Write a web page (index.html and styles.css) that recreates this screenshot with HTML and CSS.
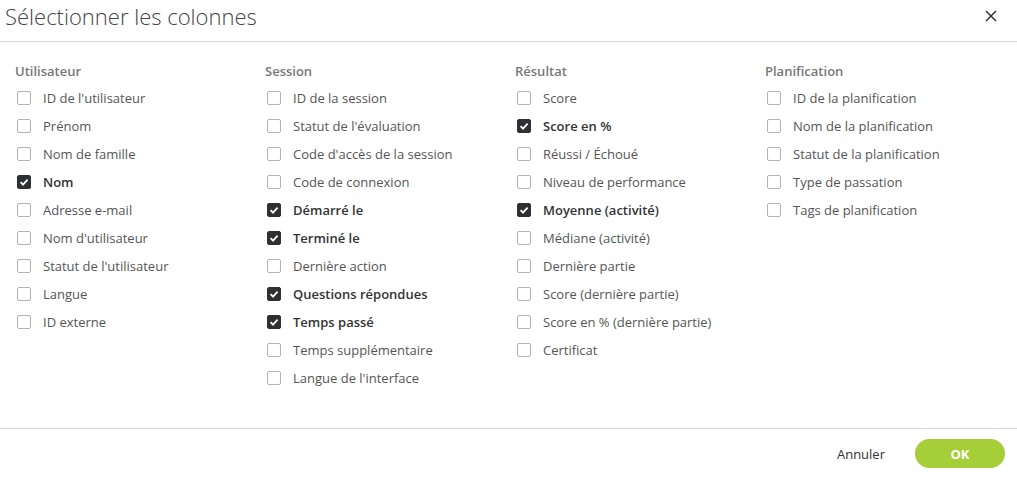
FILE: index.html
```html
<!DOCTYPE html>
<html lang="fr">
<head>
<meta charset="utf-8">
<link rel="stylesheet" href="styles.css">
</head>
<body>
<div class="dialog">
  <header class="head">
    <h1 class="title">Sélectionner les colonnes</h1>
    <button class="close" aria-label="Fermer">
      <svg width="12" height="12" viewBox="0 0 12 12"><path d="M1 1L11 11M11 1L1 11" stroke="#333" stroke-width="1.5" fill="none"/></svg>
    </button>
  </header>
  <main class="content">
    <section class="col">
      <h2 class="col-title">Utilisateur</h2>
      <label class="opt"><span class="box"></span>ID de l'utilisateur</label>
      <label class="opt"><span class="box"></span>Prénom</label>
      <label class="opt"><span class="box"></span>Nom de famille</label>
      <label class="opt on"><span class="box"><svg viewBox="0 0 12 12"><path d="M2.6 6.2L5 8.6L9.6 3.6" stroke="#fff" stroke-width="1.8" fill="none"/></svg></span>Nom</label>
      <label class="opt"><span class="box"></span>Adresse e-mail</label>
      <label class="opt"><span class="box"></span>Nom d'utilisateur</label>
      <label class="opt"><span class="box"></span>Statut de l'utilisateur</label>
      <label class="opt"><span class="box"></span>Langue</label>
      <label class="opt"><span class="box"></span>ID externe</label>
    </section>
    <section class="col">
      <h2 class="col-title">Session</h2>
      <label class="opt"><span class="box"></span>ID de la session</label>
      <label class="opt"><span class="box"></span>Statut de l'évaluation</label>
      <label class="opt"><span class="box"></span>Code d'accès de la session</label>
      <label class="opt"><span class="box"></span>Code de connexion</label>
      <label class="opt on"><span class="box"><svg viewBox="0 0 12 12"><path d="M2.6 6.2L5 8.6L9.6 3.6" stroke="#fff" stroke-width="1.8" fill="none"/></svg></span>Démarré le</label>
      <label class="opt on"><span class="box"><svg viewBox="0 0 12 12"><path d="M2.6 6.2L5 8.6L9.6 3.6" stroke="#fff" stroke-width="1.8" fill="none"/></svg></span>Terminé le</label>
      <label class="opt"><span class="box"></span>Dernière action</label>
      <label class="opt on"><span class="box"><svg viewBox="0 0 12 12"><path d="M2.6 6.2L5 8.6L9.6 3.6" stroke="#fff" stroke-width="1.8" fill="none"/></svg></span>Questions répondues</label>
      <label class="opt on"><span class="box"><svg viewBox="0 0 12 12"><path d="M2.6 6.2L5 8.6L9.6 3.6" stroke="#fff" stroke-width="1.8" fill="none"/></svg></span>Temps passé</label>
      <label class="opt"><span class="box"></span>Temps supplémentaire</label>
      <label class="opt"><span class="box"></span>Langue de l'interface</label>
    </section>
    <section class="col">
      <h2 class="col-title">Résultat</h2>
      <label class="opt"><span class="box"></span>Score</label>
      <label class="opt on"><span class="box"><svg viewBox="0 0 12 12"><path d="M2.6 6.2L5 8.6L9.6 3.6" stroke="#fff" stroke-width="1.8" fill="none"/></svg></span>Score en %</label>
      <label class="opt"><span class="box"></span>Réussi / Échoué</label>
      <label class="opt"><span class="box"></span>Niveau de performance</label>
      <label class="opt on"><span class="box"><svg viewBox="0 0 12 12"><path d="M2.6 6.2L5 8.6L9.6 3.6" stroke="#fff" stroke-width="1.8" fill="none"/></svg></span>Moyenne (activité)</label>
      <label class="opt"><span class="box"></span>Médiane (activité)</label>
      <label class="opt"><span class="box"></span>Dernière partie</label>
      <label class="opt"><span class="box"></span>Score (dernière partie)</label>
      <label class="opt"><span class="box"></span>Score en % (dernière partie)</label>
      <label class="opt"><span class="box"></span>Certificat</label>
    </section>
    <section class="col">
      <h2 class="col-title">Planification</h2>
      <label class="opt"><span class="box"></span>ID de la planification</label>
      <label class="opt"><span class="box"></span>Nom de la planification</label>
      <label class="opt"><span class="box"></span>Statut de la planification</label>
      <label class="opt"><span class="box"></span>Type de passation</label>
      <label class="opt"><span class="box"></span>Tags de planification</label>
    </section>
  </main>
  <footer class="foot">
    <button class="btn-cancel">Annuler</button>
    <button class="btn-ok">OK</button>
  </footer>
</div>
</body>
</html>
```
FILE: styles.css
```css
html, body {
  margin: 0;
  padding: 0;
  background: #fff;
}
body {
  font-family: "Open Sans", "Noto Sans", sans-serif;
  color: #444;
  width: 1017px;
  height: 478px;
  overflow: hidden;
}
.dialog {
  display: flex;
  flex-direction: column;
  height: 478px;
}
.head {
  height: 41px;
  border-bottom: 1px solid #d6d6d6;
  display: flex;
  align-items: center;
  justify-content: space-between;
  padding: 0 20px 0 5px;
  box-sizing: content-box;
}
.title {
  margin: 0;
  font-weight: 300;
  font-size: 22px;
  color: #444;
  line-height: 1;
  padding-bottom: 10px;
}
.close {
  border: 0;
  background: none;
  padding: 0;
  width: 12px;
  height: 12px;
  margin-bottom: 10px;
  display: flex;
}
.content {
  flex: 1;
  display: flex;
  padding: 19px 0 0 15px;
}
.col {
  width: 250px;
  display: flex;
  flex-direction: column;
}
.col-title {
  margin: 0 0 3px 0;
  font-size: 13px;
  font-weight: 600;
  color: #777;
  line-height: 20px;
}
.opt {
  display: flex;
  align-items: center;
  height: 28px;
  font-size: 13px;
  color: #555;
}
.opt.on {
  font-weight: 600;
  color: #333;
}
.box {
  width: 12px;
  height: 12px;
  border: 1px solid #b3b3b3;
  border-radius: 2px;
  margin: 0 12px 0 2px;
  flex: none;
  display: flex;
}
.opt.on .box {
  background: #2f3033;
  border-color: #2f3033;
}
.box svg {
  width: 12px;
  height: 12px;
}
.foot {
  height: 49px;
  border-top: 1px solid #d6d6d6;
  display: flex;
  align-items: center;
  justify-content: flex-end;
  padding-right: 12px;
}
.btn-cancel {
  border: 0;
  background: none;
  font-family: "Open Sans", sans-serif;
  font-size: 13px;
  color: #333;
  margin-right: 30px;
  padding: 0;
}
.btn-ok {
  border: 0;
  width: 90px;
  height: 29px;
  border-radius: 15px;
  background: #a6ce39;
  color: #fff;
  font-family: "Open Sans", sans-serif;
  font-size: 13px;
  font-weight: 700;
}
```
